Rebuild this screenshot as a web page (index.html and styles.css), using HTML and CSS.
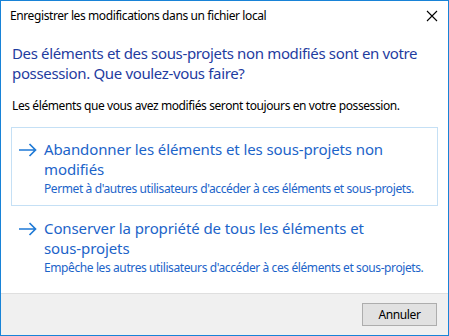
FILE: index.html
```html
<!DOCTYPE html>
<html lang="fr">
<head>
<meta charset="utf-8">
<title>Enregistrer les modifications dans un fichier local</title>
<link rel="stylesheet" href="styles.css">
</head>
<body>
<div class="window">
  <div class="titlebar">
    <span class="title">Enregistrer les modifications dans un fichier local</span>
    <svg class="close" width="12" height="12" viewBox="0 0 12 12"><path d="M1 1L11 11M11 1L1 11" stroke="#000" stroke-width="1.1" fill="none"/></svg>
  </div>
  <div class="content">
    <h1 class="instruction">Des éléments et des sous-projets non modifiés sont en votre possession. Que voulez-vous faire?</h1>
    <p class="desc">Les éléments que vous avez modifiés seront toujours en votre possession.</p>
    <div class="links">
      <a class="cmd hot" href="#">
        <svg class="arrow" width="18" height="14" viewBox="0 0 18 14"><path d="M0 7H16.5M10.5 1L16.5 7L10.5 13" stroke="#1f7ad6" stroke-width="1.7" fill="none"/></svg>
        <span class="cmd-text">
          <span class="cmd-title">Abandonner les éléments et les sous-projets non modifiés</span>
          <span class="cmd-note">Permet à d'autres utilisateurs d'accéder à ces éléments et sous-projets.</span>
        </span>
      </a>
      <a class="cmd" href="#">
        <svg class="arrow" width="18" height="14" viewBox="0 0 18 14"><path d="M0 7H16.5M10.5 1L16.5 7L10.5 13" stroke="#1f7ad6" stroke-width="1.7" fill="none"/></svg>
        <span class="cmd-text">
          <span class="cmd-title">Conserver la propriété de tous les éléments et<br>sous-projets</span>
          <span class="cmd-note">Empêche les autres utilisateurs d'accéder à ces éléments et sous-projets.</span>
        </span>
      </a>
    </div>
  </div>
  <div class="footer">
    <button class="btn" type="button">Annuler</button>
  </div>
</div>
</body>
</html>
```
FILE: styles.css
```css
* { box-sizing: border-box; }
html, body { margin: 0; padding: 0; background: #fff; }
body { font-family: "Noto Sans", "DejaVu Sans", sans-serif; }
.window {
  width: 449px;
  height: 336px;
  border: 1px solid #1883d7;
  display: flex;
  flex-direction: column;
  background: #fff;
  overflow: hidden;
}
.titlebar {
  height: 29px;
  flex: none;
  display: flex;
  align-items: center;
  justify-content: space-between;
  padding: 0 10px 0 9px;
}
.title { font-size: 12px; letter-spacing: -0.4px; color: #000; line-height: 16px; }
.close { display: block; }
.content {
  flex: 1;
  min-height: 0;
  padding: 13px 10px 0 10px;
}
.instruction {
  margin: 0 0 0 1px;
  font-weight: normal;
  font-size: 15px;
  letter-spacing: -0.35px;
  line-height: 20px;
  color: #1f3c9f;
}
.desc {
  margin: 15px 0 0 1px;
  font-size: 12px;
  letter-spacing: -0.4px;
  line-height: 16px;
  color: #000;
}
.links { margin-top: 13px; display: flex; flex-direction: column; }
.cmd {
  display: flex;
  align-items: flex-start;
  gap: 7px;
  padding: 11px 7px 8px 7px;
  border: 1px solid transparent;
  text-decoration: none;
  color: #1c64c9;
}
.cmd.hot { border-color: #c5e0f5; }
.arrow { flex: none; margin-top: 4px; display: block; }
.cmd-text { display: flex; flex-direction: column; }
.cmd-title { font-size: 15px; letter-spacing: -0.1px; line-height: 20px; }
.cmd-note { font-size: 12px; letter-spacing: -0.4px; line-height: 16px; margin-top: 2px; }
.footer {
  height: 42px;
  flex: none;
  background: #f0f0f0;
  border-top: 1px solid #dfdfdf;
  display: flex;
  align-items: center;
  justify-content: flex-end;
  padding-right: 11px;
}
.btn {
  width: 75px;
  height: 23px;
  background: #e1e1e1;
  border: 1px solid #adadad;
  font-family: inherit;
  font-size: 12px;
  letter-spacing: -0.4px;
  color: #000;
  padding: 0;
}
```
